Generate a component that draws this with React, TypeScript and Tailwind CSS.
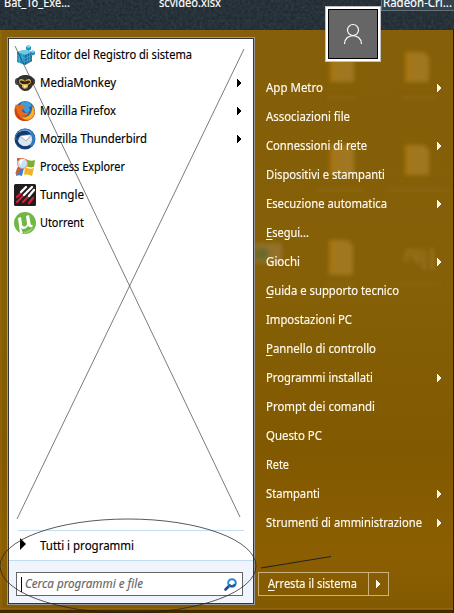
import type { ReactNode } from "react";

type Program = { label: string; icon: ReactNode; more?: boolean; width: number };
type Place = { label: string; more?: boolean; accessKey?: boolean; width: number };

function Arrow({ className = "" }: { className?: string }) {
  return (
    <svg className={className} width="4" height="8" viewBox="0 0 4 8" shapeRendering="crispEdges" fill="currentColor">
      <path d="M0 0h1v1h1v1h1v1h1v2h-1v1h-1v1h-1v1h-1z" />
    </svg>
  );
}

/* Text stretched or squeezed to a fixed run length, with an optional underlined access key. */
function Label({ text, width, accessKey = false }: { text: string; width: number; accessKey?: boolean }) {
  return (
    <svg width={width + 2} height="18" className="block shrink-0 overflow-visible">
      <text x="0" y="13" fill="currentColor" stroke="currentColor" strokeWidth=".15" textLength={width} lengthAdjust="spacingAndGlyphs">{text}</text>
      {accessKey && <path d="M0 15.5h6.5" stroke="currentColor" />}
    </svg>
  );
}

const Registry = (
  <svg width="22" height="22" viewBox="0 0 22 22">
    <path d="M3 8l7-2 8 2v9l-7 4-8-3z" fill="#1f93c6" />
    <path d="M3 8l7-2 8 2-7 3z" fill="#6fcbea" />
    <path d="M11 11l7-3v9l-7 4z" fill="#1a6c9c" />
    <path d="M3 11.5l8 3 7-3M3 14.5l8 3 7-3M5.7 9v10M8.4 10v10M13.3 10v10M15.6 9v9" stroke="#55b9de" strokeWidth=".6" fill="none" />
    <path d="M12 2.5l2.500-1.500 2.500 1.500v3L14.500 7 12 5.500zM16.500 7.500l2.200-1.300L21 7.500v2.700l-2.300 1.300-2.200-1.300z" fill="#2592c4" />
    <path d="M12 2.500L14.500 1 17 2.500 14.500 4zM16.500 7.500l2.200-1.300L21 7.500l-2.300 1.300z" fill="#8adaf1" />
  </svg>
);

const Monkey = (
  <svg width="22" height="22" viewBox="0 0 22 22">
    <ellipse cx="3.500" cy="9.500" rx="2.600" ry="3.500" fill="#4a483e" />
    <ellipse cx="18.500" cy="9.500" rx="2.600" ry="3.500" fill="#4a483e" />
    <path d="M3 8c1-6 15-7 17 0 0 6-4 11-8.500 11S3 14 3 8z" fill="#34332f" />
    <path d="M5 9c1-3 4-2 6 0 2-2 5-3 6 0 0 3-2 3-3 4 1 5-7 5-6 0-2-1-3-1-3-4z" fill="#dfb04a" />
    <path d="M5.500 9.500c2-2 4 0 5.500 0s3-2 5.500 0c-1 2-3 2.500-4 2.500h-3c-1 0-3-.500-4-2.500z" fill="#2b2925" />
    <path d="M9 13.500h4L11 16z" fill="#fff1c9" />
  </svg>
);

const Firefox = (
  <svg width="22" height="22" viewBox="0 0 22 22">
    <circle cx="11" cy="11" r="10" fill="#2465ad" />
    <path d="M7 3c4-3 9-1 11 3l-3 1 1 4-4 2-3-4-3-1z" fill="#3d9ed9" />
    <path d="M2 4c1 2 2 1 4 1l2-2c0 2 1 3 3 4-1 2-3 2-3 4 2 3 5 2 7 1-1 4-6 5-8 3 5 4 12 0 11-9 6 6 2 15-7 15S-2 13 2 4z" fill="#e96b18" />
    <path d="M18.500 6c4 6 1 14-7.500 14-4 0-7-2-9-5 6 5 16 4 16.500-9z" fill="#f8b229" />
    <path d="M1 8c-1 8 4 13 10 13l4-1C8 20 3 15 2.500 9z" fill="#cb421a" />
  </svg>
);

const Thunderbird = (
  <svg width="22" height="22" viewBox="0 0 22 22">
    <circle cx="11" cy="11" r="10.500" fill="#205899" />
    <path d="M1 10C2 2 9 0 14 1c7 2 9 10 5 16l-3 2 1-11-8-5z" fill="#3978bb" />
    <path d="M6 8l11-1c2 4 1 9-3 11-5 1-9-1-10-5z" fill="#dce5ed" />
    <path d="M6 8l6 5 5-6" fill="#fff" stroke="#8b9baa" strokeWidth=".8" />
    <path d="M2 8c3-6 10-7 15-2-4-1-7 1-10 1l-4 4z" fill="#173966" />
    <path d="M5 4c4-3 10-2 12 1" stroke="#7eb5e5" fill="none" />
    <path d="M2 12c2 8 10 9 14 6" stroke="#16396f" strokeWidth="2.500" fill="none" />
  </svg>
);

const Explorer = (
  <svg width="22" height="22" viewBox="0 0 22 22">
    <path d="M12 3c3 2 6 2 9 1l-1 7c-3 1-6 0-8-1z" fill="#7fae2e" />
    <path d="M11 11c3 2 6 2 9 1l-2 8c-3-1-5-2-8-1z" fill="#eeb626" />
    <path d="M3 12c2-1 5-1 7 0l-2 8c-2-1-4-1-6 0z" fill="#3e7fca" />
    <path d="M5 12l-2 5" stroke="#cf6033" strokeWidth="3" strokeLinecap="round" />
    <path d="M3 2h7v3H3z" fill="#d7573c" />
    <circle cx="8.500" cy="7.500" r="5" fill="#c5e4f8" stroke="#e7906c" strokeWidth="1" />
    <path d="M5 7c0-3 4-5 6-3-2 0-4 2-4 5z" fill="#fff" />
  </svg>
);

const Tunngle = (
  <svg width="22" height="22" viewBox="0 0 22 22">
    <rect width="22" height="22" rx="1.500" fill="#211d1f" />
    <g strokeWidth="2.300" strokeLinecap="round">
      <path d="M3 13l4-4M3 18l6-6M9 18l6-6M15 19l4-5" stroke="#d51e35" />
      <path d="M7 8l5-5M10 11l8-8M15 12l5-6" stroke="#fff" />
    </g>
  </svg>
);

const Utorrent = (
  <svg width="22" height="22" viewBox="0 0 22 22">
    <circle cx="11" cy="11" r="11" fill="#70b744" />
    <path d="M4 6l3-1 1 7c.5 4 5 3 5-.5L12 4l3-1 1.500 8c.3 2 1 2 2.500 2l-1 2c-2 .5-3 0-4-1-2 3-5 4-7 2l2 5-3 .5z" fill="#fff" />
    <path d="M10 20c5-1 8-4 10-8-1 6-4 9-10 10z" fill="#91cf6d" />
  </svg>
);

const programs: Program[] = [
  { label: "Editor del Registro di sistema", icon: Registry, width: 152 },
  { label: "MediaMonkey", icon: Monkey, more: true, width: 76 },
  { label: "Mozilla Firefox", icon: Firefox, more: true, width: 76 },
  { label: "Mozilla Thunderbird", icon: Thunderbird, more: true, width: 107 },
  { label: "Process Explorer", icon: Explorer, width: 85 },
  { label: "Tunngle", icon: Tunngle, width: 44 },
  { label: "Utorrent", icon: Utorrent, width: 44 },
];

const places: Place[] = [
  { label: "App Metro", more: true, width: 57 },
  { label: "Associazioni file", width: 84 },
  { label: "Connessioni di rete", more: true, width: 101 },
  { label: "Dispositivi e stampanti", width: 119 },
  { label: "Esecuzione automatica", more: true, width: 121 },
  { label: "Esegui...", accessKey: true, width: 43 },
  { label: "Giochi", more: true, width: 34 },
  { label: "Guida e supporto tecnico", accessKey: true, width: 133 },
  { label: "Impostazioni PC", width: 86 },
  { label: "Pannello di controllo", accessKey: true, width: 110 },
  { label: "Programmi installati", more: true, width: 107 },
  { label: "Prompt dei comandi", width: 109 },
  { label: "Questo PC", width: 56 },
  { label: "Rete", width: 23 },
  { label: "Stampanti", more: true, width: 54 },
  { label: "Strumenti di amministrazione", more: true, width: 156 },
];

/* Desktop icons showing through the tinted glass, and the shading of the glass. */
function Glass() {
  return (
    <svg className="absolute inset-0" width="454" height="613">
      <defs>
        <filter id="soft" x="-50%" y="-50%" width="200%" height="200%"><feGaussianBlur stdDeviation="2" /></filter>
        <linearGradient id="tint" x1="0" y1="0" x2="0" y2="1">
          <stop offset="0" stopColor="#855f09" />
          <stop offset=".45" stopColor="#856007" />
          <stop offset=".72" stopColor="#815900" />
          <stop offset=".91" stopColor="#8c5e02" />
          <stop offset="1" stopColor="#825a01" />
        </linearGradient>
        <filter id="grain"><feTurbulence type="fractalNoise" baseFrequency=".35" numOctaves="3" seed="4" /><feColorMatrix values="0 0 0 0 .45 0 0 0 0 .5 0 0 0 0 .52 .2 0 0 0 -.05" /></filter>
      </defs>
      <rect width="454" height="30" fill="#1f2a32" />
      <rect width="454" height="30" filter="url(#grain)" />
      <rect y="30" width="453" height="580" fill="url(#tint)" />
      <rect y="30" width="2" height="580" fill="#9a6706" opacity=".6" />
      <rect x="453" y="30" width="1" height="583" fill="#17201c" />
      <rect y="608" width="453" height="1" fill="#94660a" />
      <rect y="610" width="453" height="3" fill="#412a02" />
      <g filter="url(#soft)">
        <path d="M330 52h24v30h-24zM405 52h19l5 5v25h-24zM330 145h19l5 5v25h-24zM405 145h19l5 5v25h-24zM329 240h19l5 5v30h-24z" fill="#a37a22" opacity=".9" />
        <path d="M330 52h7v30h-7zM405 52h7v30h-7zM330 145h7v30h-7zM405 145h7v30h-7zM329 240h7v30h-7z" fill="#a87710" opacity=".8" />
        <path d="M255 243h27v20h-27z" fill="#94712a" />
        <circle cx="262" cy="254" r="7" fill="#6c6a29" />
        <path d="M406 262c0-15 8-16 8-2m4-12v16m6-14v20m8-22v22" stroke="#966f1d" strokeWidth="4" fill="none" />
        <path d="M327 98h28M401 98h36M315 190h50M385 190h65M325 284h30M392 284h48" stroke="#926915" strokeWidth="4" opacity=".5" />
      </g>
    </svg>
  );
}

function ProgramsPane() {
  return (
    <section className="flex h-[568px] w-[248px] flex-col border border-[#989898] text-black">
      <div className="flex min-h-0 flex-1 flex-col border border-[#343638] bg-white">
        <ul className="flex flex-col pt-[2px]">
          {programs.map((p) => (
            <li key={p.label} className="flex h-7 items-center pl-[5px] pr-[12px]">
              <span className="mr-[4px] h-[22px] w-[22px]">{p.icon}</span>
              <Label text={p.label} width={p.width} />
              {p.more && <Arrow className="ml-auto" />}
            </li>
          ))}
        </ul>
        <div className="mx-[9px] mt-auto flex h-[30px] items-center border-t border-[#c4dcf2] pl-[2px]">
          <svg className="relative -top-[2px]" width="6" height="12" viewBox="0 0 6 12"><path d="M0 0l6 6-6 6z" /></svg>
          <div className="ml-[14px]"><Label text="Tutti i programmi" width={94} /></div>
        </div>
        <div className="h-[43px] border-t border-[#c4dcf2] bg-[#f0f4fc] pt-[11px] pl-[7px]">
          <div className="flex h-6 w-[227px] items-center border border-[#656565] bg-white pr-[5px] pl-[4px]">
            <span className="h-[15px] w-px bg-black" />
            <span className="ml-[3px] text-[#666] italic"><Label text="Cerca programmi e file" width={118} /></span>
            <svg className="ml-auto" width="13" height="13" viewBox="0 0 13 13" fill="none">
              <path d="M5.500 7.500L1.500 11.500" stroke="#214a91" strokeWidth="2.600" strokeLinecap="round" />
              <circle cx="8" cy="5" r="3.800" stroke="#2789cd" strokeWidth="2" />
              <path d="M5 7a3.800 3.800 0 0 0 6-1" stroke="#2455a4" strokeWidth="2" />
            </svg>
          </div>
        </div>
      </div>
    </section>
  );
}

function PlacesPane() {
  return (
    <section className="flex w-[199px] flex-col pt-[36px] text-[#fffaf0]">
      <ul>
        {places.map((p) => (
          <li key={p.label} className="flex h-[29px] items-center pr-[13px] pl-[11px]">
            <Label text={p.label} width={p.width} accessKey={p.accessKey} />
            {p.more && <Arrow className="ml-auto" />}
          </li>
        ))}
      </ul>
      <div className="mt-[35px] ml-[3px] flex h-6 w-[131px] items-center border border-[#cab27c]">
        <div className="flex h-full w-[110px] items-center border-r border-[#cab27c] pl-[9px]">
          <Label text="Arresta il sistema" width={89} accessKey />
        </div>
        <Arrow className="ml-[7px]" />
      </div>
    </section>
  );
}

export default function App() {
  return (
    <main className="relative h-[613px] w-[454px] overflow-hidden bg-[#805900] font-['Noto_Sans','Open_Sans',sans-serif] text-[12px]">
      <Glass />
      <header className="relative h-[37px] text-white">
        <div className="absolute top-[-6px] left-[4px]"><Label text="Bat_To_Exe..." width={66} /></div>
        <div className="absolute top-[-6px] left-[159px]"><Label text="scvideo.xlsx" width={62} /></div>
        <div className="absolute top-0 left-[381px] h-[11px] w-[73px] border-b border-l border-[#65727a] bg-[#35434e]">
          <div className="absolute top-[-6px] left-[1px]"><Label text="Radeon-Cri..." width={69} /></div>
        </div>
      </header>
      <div className="relative flex pl-[7px]">
        <ProgramsPane />
        <PlacesPane />
      </div>
      <div className="absolute top-[6px] left-[325px] h-14 w-14 border border-[#bfc1c2] bg-white p-[2px]">
        <div className="flex h-full items-center justify-center border border-black bg-[#666]">
          <svg width="20" height="22" viewBox="0 0 20 22" fill="none" stroke="#fff" strokeWidth="1.200">
            <circle cx="10" cy="7" r="5.500" />
            <path d="M1.500 21c0-11 17-11 17 0" />
          </svg>
        </div>
      </div>
      <svg className="absolute inset-0" width="454" height="613" fill="none" stroke="#222" strokeWidth=".75">
        <path d="M15 46L240 517M244 49L17 519" strokeWidth=".6" />
        <ellipse cx="128" cy="566" rx="128" ry="47" />
        <path d="M261 568L331 556.500" strokeWidth="1" />
      </svg>
    </main>
  );
}
